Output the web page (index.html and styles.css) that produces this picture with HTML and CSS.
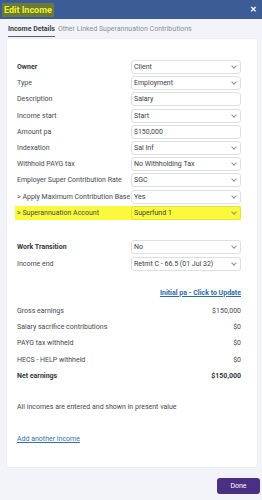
FILE: index.html
```html
<!DOCTYPE html>
<html lang="en">
<head>
  <meta charset="UTF-8" />
  <meta name="viewport" content="width=device-width, initial-scale=1.0"/>
  <title>Edit Income</title>
  <link rel="stylesheet" href="styles.css">
</head>
<body>

<!-- Header -->
<div class="modal-header">
  <span class="modal-title">Edit Income</span>
  <span class="modal-close">&#x2715;</span>
</div>

<!-- Tabs -->
<div class="tabs">
  <span class="tab active">Income Details</span>
  <span class="tab">Other Linked Superannuation Contributions</span>
</div>

<!-- Card -->
<div class="card">
  <div class="form-group">
    <div class="row"><label class="lb bold">Owner</label><div class="field select">Client</div></div>
    <div class="row"><label class="lb">Type</label><div class="field select">Employment</div></div>
    <div class="row"><label class="lb">Description</label><div class="field">Salary</div></div>
    <div class="row"><label class="lb">Income start</label><div class="field select">Start</div></div>
    <div class="row"><label class="lb">Amount pa</label><div class="field">$150,000</div></div>
    <div class="row"><label class="lb">Indexation</label><div class="field select">Sal Inf</div></div>
    <div class="row"><label class="lb">Withhold PAYG tax</label><div class="field select">No Withholding Tax</div></div>
    <div class="row"><label class="lb">Employer Super Contribution Rate</label><div class="field select">SGC</div></div>
    <div class="row"><label class="lb">&gt; Apply Maximum Contribution Base</label><div class="field select">Yes</div></div>
    <div class="row hl"><label class="lb">&gt; Superannuation Account</label><div class="field select">Superfund 1</div></div>
  </div>

  <div class="form-group second">
    <div class="row"><label class="lb bold">Work Transition</label><div class="field select">No</div></div>
    <div class="row"><label class="lb">Income end</label><div class="field select">Retmt C - 66.5 (01 Jul 32)</div></div>
  </div>

  <div class="summary">
    <div class="summary-link"><a href="#">Initial pa - Click to Update</a></div>
    <div class="srow"><span>Gross earnings</span><span>$150,000</span></div>
    <div class="srow"><span>Salary sacrifice contributions</span><span>$0</span></div>
    <div class="srow"><span>PAYG tax withheld</span><span>$0</span></div>
    <div class="srow"><span>HECS - HELP withheld</span><span>$0</span></div>
    <div class="srow bold"><span>Net earnings</span><span>$150,000</span></div>
  </div>

  <p class="note">All incomes are entered and shown in present value</p>
  <a class="add-link" href="#">Add another income</a>
</div>

<div class="footer">
  <button class="btn-done">Done</button>
</div>

</body>
</html>
```

FILE: styles.css
```css
body {
  font-family: Roboto, "Liberation Sans", sans-serif;
  margin: 0;
  padding: 0;
  background: #f3f4f9;
  color: #454a52;
  font-size: 7px;
}

.modal-header {
  height: 19px;
  background: #3c5c98;
  display: flex;
  align-items: center;
  justify-content: space-between;
  padding: 0 5px 0 2px;
}

.modal-title {
  background: #6b7a3c;
  color: #f2f224;
  font-weight: bold;
  font-size: 9px;
  padding: 0 2px;
  height: 14px;
  line-height: 14px;
}

.modal-close {
  color: #fff;
  font-size: 8px;
  font-weight: bold;
}

.tabs {
  display: flex;
  gap: 3px;
  padding: 0 8px;
  height: 18px;
  align-items: flex-end;
}

.tab {
  color: #8a8f98;
  padding-bottom: 3px;
  border-bottom: 1px solid transparent;
}

.tab.active {
  color: #3a3f47;
  font-weight: bold;
  border-bottom: 1px solid #5a6272;
}

.card {
  margin: 1px 4px 0 6px;
  background: #fff;
  border: 1px solid #eceef3;
  border-radius: 3px;
  padding: 21px 16px 24px 10px;
}

.form-group {
  display: flex;
  flex-direction: column;
  gap: 2.2px;
}

.form-group.second {
  margin-top: 20px;
  gap: 3px;
}

.row {
  display: flex;
  align-items: center;
  height: 14px;
}

.row.hl {
  background: #fbf93c;
  margin-left: -2px;
  padding-left: 2px;
}

.lb {
  width: 114px;
  flex: none;
}

.bold {
  font-weight: bold;
  color: #33373d;
}

.field {
  flex: 1;
  height: 12px;
  line-height: 12px;
  border: 1px solid #dcdfe5;
  border-radius: 3px;
  padding: 0 2px;
  color: #3a3e45;
  background: #fff;
  position: relative;
}

.row.hl .field {
  background: #fbf93c;
  border-color: #e6e23a;
}

.field.select::after {
  content: "";
  position: absolute;
  right: 4px;
  top: 3px;
  width: 3px;
  height: 3px;
  border-right: 1px solid #8b9099;
  border-bottom: 1px solid #8b9099;
  transform: rotate(45deg);
}

.summary {
  margin-top: 18px;
}

.summary-link {
  text-align: right;
  height: 12px;
  margin-bottom: 2px;
}

.summary-link a {
  color: #2f6aa8;
  font-weight: bold;
}

.srow {
  display: flex;
  justify-content: space-between;
  height: 16.25px;
  align-items: center;
}

.note {
  margin: 19px 0 0 0;
  height: 10px;
}

.add-link {
  display: block;
  margin-top: 22px;
  color: #3570ae;
}

.footer {
  display: flex;
  justify-content: flex-end;
  padding: 10px 2px 0 0;
}

.btn-done {
  background: #4a2f84;
  color: #fff;
  border: none;
  border-radius: 3px;
  font-family: Roboto, "Liberation Sans", sans-serif;
  font-size: 7px;
  width: 43px;
  height: 16px;
}
```
